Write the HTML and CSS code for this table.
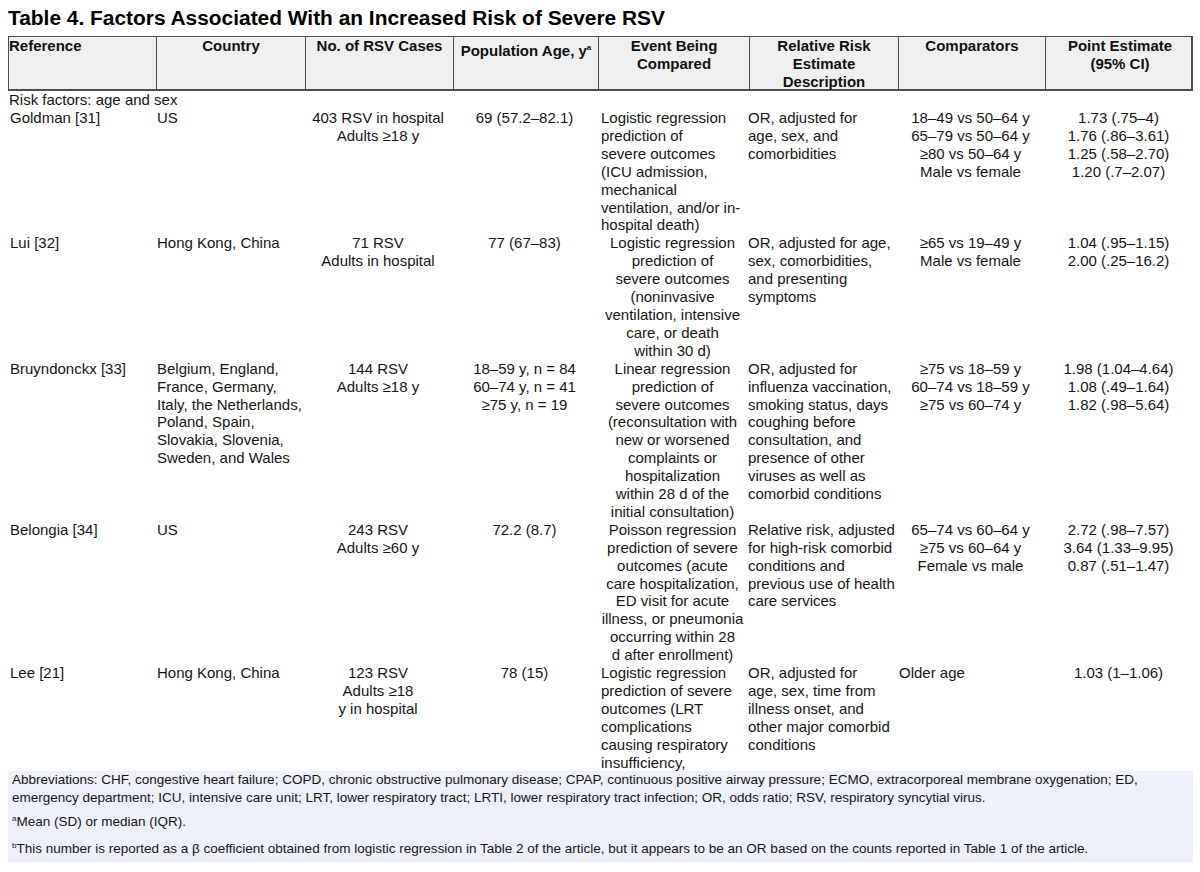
FILE: index.html
```html
<!DOCTYPE html>
<html lang="en">
<head>
<meta charset="utf-8">
<title>Table 4</title>
<link rel="stylesheet" href="styles.css">
</head>
<body>
<div class="page">
  <h1 class="title">Table 4. Factors Associated With an Increased Risk of Severe RSV</h1>
  <div class="table">
    <div class="thead">
      <div class="th th-left">Reference</div>
      <div class="th">Country</div>
      <div class="th">No. of RSV Cases</div>
      <div class="th th-low">Population Age, y<sup>a</sup></div>
      <div class="th">Event Being<br>Compared</div>
      <div class="th">Relative Risk<br>Estimate<br>Description</div>
      <div class="th">Comparators</div>
      <div class="th">Point Estimate<br>(95% CI)</div>
    </div>
    <div class="section">Risk factors: age and sex</div>

    <div class="row">
      <div class="td">Goldman [31]</div>
      <div class="td">US</div>
      <div class="td c">403 RSV in hospital<br>Adults ≥18 y</div>
      <div class="td c">69 (57.2–82.1)</div>
      <div class="td ev">Logistic regression<br>prediction of<br>severe outcomes<br>(ICU admission,<br>mechanical<br>ventilation, and/or in-<br>hospital death)</div>
      <div class="td rr">OR, adjusted for<br>age, sex, and<br>comorbidities</div>
      <div class="td c">18–49 vs 50–64 y<br>65–79 vs 50–64 y<br>≥80 vs 50–64 y<br>Male vs female</div>
      <div class="td c">1.73 (.75–4)<br>1.76 (.86–3.61)<br>1.25 (.58–2.70)<br>1.20 (.7–2.07)</div>
    </div>

    <div class="row">
      <div class="td">Lui [32]</div>
      <div class="td">Hong Kong, China</div>
      <div class="td c">71 RSV<br>Adults in hospital</div>
      <div class="td c">77 (67–83)</div>
      <div class="td c">Logistic regression<br>prediction of<br>severe outcomes<br>(noninvasive<br>ventilation, intensive<br>care, or death<br>within 30 d)</div>
      <div class="td rr">OR, adjusted for age,<br>sex, comorbidities,<br>and presenting<br>symptoms</div>
      <div class="td c">≥65 vs 19–49 y<br>Male vs female</div>
      <div class="td c">1.04 (.95–1.15)<br>2.00 (.25–16.2)</div>
    </div>

    <div class="row">
      <div class="td">Bruyndonckx [33]</div>
      <div class="td">Belgium, England,<br>France, Germany,<br>Italy, the Netherlands,<br>Poland, Spain,<br>Slovakia, Slovenia,<br>Sweden, and Wales</div>
      <div class="td c">144 RSV<br>Adults ≥18 y</div>
      <div class="td c">18–59 y, n = 84<br>60–74 y, n = 41<br>≥75 y, n = 19</div>
      <div class="td c">Linear regression<br>prediction of<br>severe outcomes<br>(reconsultation with<br>new or worsened<br>complaints or<br>hospitalization<br>within 28 d of the<br>initial consultation)</div>
      <div class="td rr">OR, adjusted for<br>influenza vaccination,<br>smoking status, days<br>coughing before<br>consultation, and<br>presence of other<br>viruses as well as<br>comorbid conditions</div>
      <div class="td c">≥75 vs 18–59 y<br>60–74 vs 18–59 y<br>≥75 vs 60–74 y</div>
      <div class="td c">1.98 (1.04–4.64)<br>1.08 (.49–1.64)<br>1.82 (.98–5.64)</div>
    </div>

    <div class="row">
      <div class="td">Belongia [34]</div>
      <div class="td">US</div>
      <div class="td c">243 RSV<br>Adults ≥60 y</div>
      <div class="td c">72.2 (8.7)</div>
      <div class="td c">Poisson regression<br>prediction of severe<br>outcomes (acute<br>care hospitalization,<br>ED visit for acute<br>illness, or pneumonia<br>occurring within 28<br>d after enrollment)</div>
      <div class="td rr">Relative risk, adjusted<br>for high-risk comorbid<br>conditions and<br>previous use of health<br>care services</div>
      <div class="td c">65–74 vs 60–64 y<br>≥75 vs 60–64 y<br>Female vs male</div>
      <div class="td c">2.72 (.98–7.57)<br>3.64 (1.33–9.95)<br>0.87 (.51–1.47)</div>
    </div>

    <div class="row">
      <div class="td">Lee [21]</div>
      <div class="td">Hong Kong, China</div>
      <div class="td c">123 RSV<br>Adults ≥18<br>y in hospital</div>
      <div class="td c">78 (15)</div>
      <div class="td ev">Logistic regression<br>prediction of severe<br>outcomes (LRT<br>complications<br>causing respiratory<br>insufficiency,</div>
      <div class="td rr">OR, adjusted for<br>age, sex, time from<br>illness onset, and<br>other major comorbid<br>conditions</div>
      <div class="td">Older age</div>
      <div class="td c">1.03 (1–1.06)</div>
    </div>
  </div>

  <div class="notes">
    <p>Abbreviations: CHF, congestive heart failure; COPD, chronic obstructive pulmonary disease; CPAP, continuous positive airway pressure; ECMO, extracorporeal membrane oxygenation; ED,<br>emergency department; ICU, intensive care unit; LRT, lower respiratory tract; LRTI, lower respiratory tract infection; OR, odds ratio; RSV, respiratory syncytial virus.</p>
    <p class="n-a"><sup>a</sup>Mean (SD) or median (IQR).</p>
    <p class="n-b"><sup>b</sup>This number is reported as a β coefficient obtained from logistic regression in Table 2 of the article, but it appears to be an OR based on the counts reported in Table 1 of the article.</p>
  </div>
</div>
</body>
</html>
```

FILE: styles.css
```css
* {
  box-sizing: border-box;
}

body {
  margin: 0;
  background: #ffffff;
  color: #151515;
  font-family: "Liberation Sans", Arial, sans-serif;
}

.page {
  width: 1200px;
  padding: 6px 7px 0 8px;
}

.title {
  margin: 0 0 6px;
  font-size: 20.9px;
  line-height: 24px;
  font-weight: bold;
  color: #000;
  white-space: nowrap;
}

.table {
  height: 735px;
  overflow: hidden;
}

.thead,
.row {
  display: grid;
  grid-template-columns: 147px 149px 148px 145px 151px 149px 147px 149px;
}

.thead {
  height: 55px;
  background: #efefef;
  border: 1px solid #4d4d4d;
  border-right-width: 2px;
  border-bottom-width: 2px;
}

.th {
  font-size: 15px;
  line-height: 18px;
  font-weight: bold;
  text-align: center;
  white-space: nowrap;
  color: #111;
  border-left: 1px solid #4d4d4d;
}

.th-left {
  text-align: left;
  border-left: none;
}

.th-low {
  padding-top: 5px;
}

.th sup {
  font-size: 8px;
  line-height: 0;
  vertical-align: 6px;
}

.section {
  font-size: 15px;
  line-height: 18px;
  height: 18px;
  padding-left: 1px;
  white-space: nowrap;
}

.row {
  font-size: 15px;
  line-height: 17.9px;
}

.td {
  padding: 0 2px;
  white-space: nowrap;
}

.c {
  text-align: center;
}

.ev {
  padding-left: 4px;
}

.rr {
  padding-left: 0;
}

.notes {
  height: 91px;
  padding: 0 4px 4px;
  background: #eef0f9;
  font-size: 13.5px;
  line-height: 18px;
  color: #151515;
}

.notes p {
  margin: 0;
  white-space: nowrap;
}

.notes .n-a {
  margin-top: 6px;
}

.notes .n-b {
  margin-top: 9px;
}

.notes sup {
  font-size: 8px;
  line-height: 0;
  vertical-align: 5px;
}
```
